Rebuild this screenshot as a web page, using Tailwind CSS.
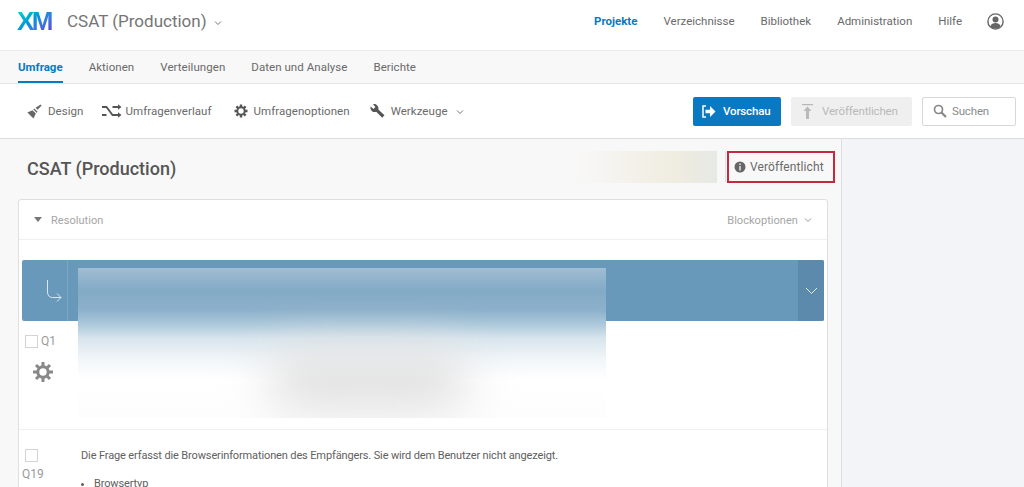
<!doctype html>
<html lang="de">
<head>
<meta charset="utf-8">
<script src="https://cdn.jsdelivr.net/npm/@tailwindcss/browser@4"></script>
<title>CSAT (Production)</title>
</head>
<body class="m-0 h-[487px] w-[1024px] overflow-hidden bg-white font-['Roboto',sans-serif] text-[#6a6a6a]">
<header class="flex h-[51px] items-center border-b border-[#ececec] bg-white pb-[8px]">
  <span class="ml-[17px] w-[36px] bg-gradient-to-br from-[#22e0b0] via-[#0b8de0] to-[#5b35d5] bg-clip-text font-['Liberation_Sans',sans-serif] text-[26px] leading-none font-bold tracking-[-2.5px] text-transparent">XM</span>
  <span class="mt-[1px] ml-[14px] text-[17px] text-[#757575]">CSAT (Production)</span>
  <svg class="mt-[3px] ml-[7px] h-[6px] w-[8px]" viewBox="0 0 8 6" fill="none" stroke="#777" stroke-width="1"><path d="M1 1.5l3 3 3-3"/></svg>
  <nav class="mr-[20px] ml-auto flex items-center text-[11.5px]">
    <a class="mt-[1px] mr-[26px] font-bold text-[#0b78c2]">Projekte</a>
    <a class="mt-[1px] mr-[26px]">Verzeichnisse</a>
    <a class="mt-[1px] mr-[26px]">Bibliothek</a>
    <a class="mt-[1px] mr-[26px]">Administration</a>
    <a class="mt-[1px] mr-[25px]">Hilfe</a>
    <svg class="h-[17px] w-[17px]" viewBox="0 0 17 17"><circle cx="8.5" cy="8.5" r="7.6" fill="none" stroke="#666" stroke-width="1.4"/><circle cx="8.5" cy="6.6" r="3" fill="#666"/><path d="M3.2 13.4c1-2.6 3-3.4 5.3-3.4s4.3.8 5.3 3.4a7 7 0 0 1-10.6 0z" fill="#666"/></svg>
  </nav>
</header>
<div class="flex h-[33px] gap-[26px] border-b border-[#e6e6e6] bg-[#f8f8f8] pl-[18px] text-[11.5px] tracking-[.05px]">
  <a class="flex h-[32px] items-center border-b-2 border-[#0b78c2] pt-[3px] font-bold tracking-normal text-[#0b78c2]">Umfrage</a>
  <a class="flex h-[32px] items-center pt-[2px]">Aktionen</a>
  <a class="flex h-[32px] items-center pt-[2px]">Verteilungen</a>
  <a class="flex h-[32px] items-center pt-[2px]">Daten und Analyse</a>
  <a class="flex h-[32px] items-center pt-[2px]">Berichte</a>
</div>
<div class="flex h-[55px] items-center border-b border-[#dcdcdc] bg-white pl-[27px] text-[11.5px] tracking-[.05px]">
  <svg class="h-[15px] w-[15px]" viewBox="0 0 15 15" fill="#666"><path d="M13.6.4l1 1-4 4.4-2-2z"/><path d="M7.2 4.4l3.4 3.400-.9 1-3.400-3.400z"/><path d="M5.500 6.300l3.300 3.300-2.300 5L.4 8.500z"/></svg>
  <span class="ml-[6px] pt-[2px]">Design</span>
  <svg class="ml-[18px] h-[14px] w-[20px]" viewBox="0 0 20 14" fill="none" stroke="#555" stroke-width="1.8"><path d="M0 3h4.500l6 8H17M0 11h4.500M10.500 3H17"/><path d="M16 .3l3.500 2.700L16 5.700zM16 8.300l3.500 2.700-3.500 2.700z" fill="#555" stroke="none"/></svg>
  <span class="ml-[4px] pt-[2px]">Umfragenverlauf</span>
  <svg class="ml-[22px] h-[14px] w-[14px]" viewBox="0 0 14 14"><circle cx="7" cy="7" r="3.700" fill="none" stroke="#555" stroke-width="2"/><path d="M7 .5v2.500M7 11v2.500M.5 7H3M11 7h2.500M2.400 2.400l1.800 1.800M9.800 9.800l1.800 1.800M2.400 11.600l1.800-1.800M9.800 4.200l1.800-1.800" stroke="#555" stroke-width="2.4"/></svg>
  <span class="ml-[6px] pt-[2px]">Umfragenoptionen</span>
  <svg class="ml-[20px] h-[14px] w-[15px]" viewBox="0 0 15 14" fill="#555"><path d="M.6 2.600l2.900 2.300 1.900-2L3 .3a4.300 4.300 0 0 1 5.300 5.300l6.200 5.700-2.300 2.500-6-6A4.300 4.300 0 0 1 .6 2.600z"/></svg>
  <span class="ml-[6px] pt-[2px]">Werkzeuge</span>
  <svg class="mt-[1px] ml-[8px] h-[6px] w-[8px]" viewBox="0 0 8 6" fill="none" stroke="#777"><path d="M1 1.500l3 3 3-3"/></svg>
  <button class="ml-auto flex h-[29px] w-[88px] items-center rounded-[2px] bg-[#0b78c2] pl-[9px] font-medium tracking-[-.15px] text-white">
    <svg class="h-[13px] w-[14px]" viewBox="0 0 14 13" fill="none"><path d="M4 1H1v11h3" stroke="#fff" stroke-width="1.5"/><path d="M3.500 4.700H8V1l5.500 5.500L8 12V8.300H3.500z" fill="#fff"/></svg>
    <span class="ml-[7px] pt-[1px]">Vorschau</span>
  </button>
  <button class="ml-[10px] flex h-[29px] w-[121px] items-center rounded-[2px] bg-[#efefef] pl-[11px] tracking-[-.15px] text-[#b9b9b9]">
    <svg class="h-[15px] w-[11px]" viewBox="0 0 11 15" fill="#b9b9b9"><path d="M0 0h11v1.300H0zM5.500 2.500l4 4.500H7v8H4V7H1.500z"/></svg>
    <span class="ml-[9px] pt-[1px]">Veröffentlichen</span>
  </button>
  <div class="mr-[8px] ml-[10px] flex h-[29px] w-[94px] items-center rounded-[2px] border border-[#d8d8d8] pl-[10px] tracking-[-.15px] text-[#8a8a8a]">
    <svg class="h-[14px] w-[14px]" viewBox="0 0 14 14" fill="none" stroke="#888"><circle cx="5.500" cy="5.500" r="4" stroke-width="1.7"/><path d="M8.500 8.500l4.500 4.500" stroke-width="2.2"/></svg>
    <span class="ml-[5px] pt-[1px]">Suchen</span>
  </div>
</div>
<main class="relative flex h-[348px] overflow-hidden">
  <section class="relative h-full w-[842px] shrink-0 overflow-hidden border-r border-[#dedede] bg-[#f8f8f8]">
    <div class="flex h-[60px] items-center pb-[4px] pl-[27px]">
      <h1 class="mt-[2px] w-[148px] text-[18px] font-medium whitespace-nowrap text-[#555]">CSAT (Production)</h1>
      <div class="ml-[400px] h-[32px] w-[142px] bg-gradient-to-r from-[#f8f8f8] via-[#f0ece0] via-70% to-[#e6e9e4] blur-[.5px]"></div>
      <div class="ml-[8px] h-[30px] w-px bg-[#e2e2e2]"></div>
      <div class="ml-[1px] flex h-[32px] w-[108px] items-center border-2 border-[#c8283c] pl-[5px] text-[12px] tracking-[.1px]">
        <svg class="h-[12px] w-[12px]" viewBox="0 0 12 12"><circle cx="6" cy="6" r="5.5" fill="#666"/><path d="M5.200 2.500h1.600v1.500H5.200zM5.200 5h1.600v4.500H5.200z" fill="#ddd"/></svg>
        <span class="ml-[4px]">Veröffentlicht</span>
      </div>
    </div>
    <div class="ml-[18px] w-[810px] rounded-t-[3px] border border-[#dfdfdf] bg-white">
      <div class="flex h-[40px] items-center border-b border-[#f0f0f0] pr-[15px] pl-[15px] text-[11px] tracking-[.05px] text-[#a5a5a5]">
        <svg class="h-[5px] w-[8px]" viewBox="0 0 8 5" fill="#777"><path d="M0 0h8L4 5z"/></svg>
        <span class="ml-[9px] pt-[3px]">Resolution</span>
        <span class="ml-auto pt-[3px]">Blockoptionen</span>
        <svg class="ml-[6px] h-[6px] w-[8px]" viewBox="0 0 8 6" fill="none" stroke="#999"><path d="M1 1.500l3 3 3-3"/></svg>
      </div>
      <div class="px-[3px] pt-[20px]">
        <div class="flex h-[61px] overflow-hidden rounded-[2px] bg-[#6899bb]">
          <div class="flex w-[46px] items-center justify-center border-r border-[#7ba6c4] pl-[19px]">
            <svg class="h-[24px] w-[16px]" viewBox="0 0 16 24" fill="none" stroke="#dbe7ef"><path d="M1.500 1v12c0 3.500 2 5.500 5 5.500H15"/><path d="M11 14.500l4 4-4 4"/></svg>
          </div>
          <div class="ml-auto flex w-[26px] items-center justify-center bg-[#5c8aac]">
            <svg class="h-[8px] w-[13px]" viewBox="0 0 13 8" fill="none" stroke="#e3ecf2"><path d="M1 1l5.500 5.500L12 1"/></svg>
          </div>
        </div>
      </div>
      <div class="flex h-[109px] border-b border-[#f0f0f0] pl-[6px]">
        <div class="pt-[11px]">
          <div class="flex items-center gap-[3px] text-[12px] text-[#9a9a9a]">
            <span class="h-[13px] w-[13px] border border-[#d4d4d4]"></span>Q1
          </div>
          <svg class="mt-[12px] ml-[8px] h-[20px] w-[20px]" viewBox="0 0 20 20"><circle cx="10" cy="10" r="5.2" fill="none" stroke="#888" stroke-width="3"/><path d="M10 0v4M10 16v4M0 10h4M16 10h4M3 3l2.800 2.800M14.200 14.200L17 17M3 17l2.800-2.800M14.200 5.800L17 3" stroke="#888" stroke-width="3"/></svg>
        </div>
      </div>
      <div class="flex pt-[19px] pl-[3px]">
        <div class="w-[59px] text-[12px] text-[#9a9a9a]">
          <span class="ml-[3px] block h-[13px] w-[13px] border border-[#d4d4d4]"></span>
          <span class="mt-[3px] block">Q19</span>
        </div>
        <div class="text-[11px] leading-[14px] tracking-[-.13px] text-[#606060]">
          <p>Die Frage erfasst die Browserinformationen des Empfängers. Sie wird dem Benutzer nicht angezeigt.</p>
          <ul class="mt-[14px] ml-[13px] list-disc"><li>Browsertyp</li></ul>
        </div>
      </div>
    </div>
    <div class="absolute top-[129px] left-[78px] h-[150px] w-[528px] overflow-hidden bg-[linear-gradient(to_bottom,#a0bdd3_0%,#83aac6_15%,#8db1cb_28%,#aac7da_37%,#d8e5ed_47%,#f0f5f8_60%,#ffffff_74%,#fdfdfd_100%)]">
      <div class="absolute top-[82px] left-[190px] h-[60px] w-[200px] rounded-full bg-[#e0e0e0] blur-[24px]"></div>
    </div>
  </section>
  <aside class="flex-1 bg-[#f2f4f8]"></aside>
</main>
</body>
</html>
